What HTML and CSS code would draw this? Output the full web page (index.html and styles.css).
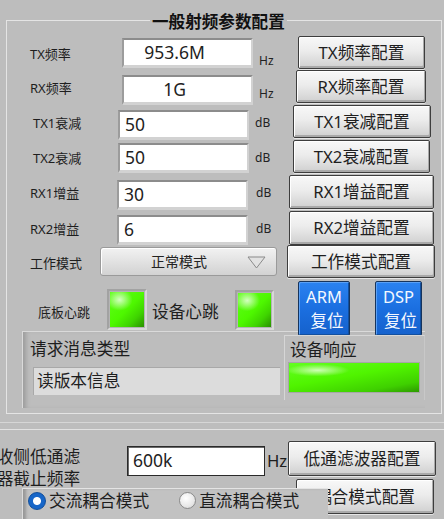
FILE: index.html
```html
<!DOCTYPE html>
<html lang="zh">
<head>
<meta charset="utf-8">
<title>一般射频参数配置</title>
<link rel="stylesheet" href="styles.css">
</head>
<body>
<div class="screen">
  <div class="top-pane">
    <fieldset class="group">
      <legend class="group-title">一般射频参数配置</legend>

      <div class="row r1">
        <span class="lbl lw-a">TX频率</span>
        <div class="num num-center">953.6M</div>
        <span class="unit low uw-45">Hz</span>
        <button class="btn bw-127">TX频率配置</button>
      </div>
      <div class="row r2">
        <span class="lbl lw-a">RX频率</span>
        <div class="num num-center">1G</div>
        <span class="unit low uw-43">Hz</span>
        <button class="btn bw-130">RX频率配置</button>
      </div>
      <div class="row r3">
        <span class="lbl lw-b">TX1衰减</span>
        <div class="num">50</div>
        <span class="unit uw-44">dB</span>
        <button class="btn bw-138">TX1衰减配置</button>
      </div>
      <div class="row r4">
        <span class="lbl lw-b">TX2衰减</span>
        <div class="num">50</div>
        <span class="unit uw-44">dB</span>
        <button class="btn bw-137">TX2衰减配置</button>
      </div>
      <div class="row r5">
        <span class="lbl lw-c">RX1增益</span>
        <div class="num">30</div>
        <span class="unit uw-41">dB</span>
        <button class="btn bw-145">RX1增益配置</button>
      </div>
      <div class="row r6">
        <span class="lbl lw-c">RX2增益</span>
        <div class="num">6</div>
        <span class="unit uw-41">dB</span>
        <button class="btn bw-145">RX2增益配置</button>
      </div>
      <div class="row r7">
        <span class="lbl lw-d">工作模式</span>
        <div class="ring">
          <span class="ring-text">正常模式</span>
          <svg class="ring-arrow" width="19" height="13" viewBox="0 0 19 13"><polygon points="1,1 18,1 9.5,12" fill="#e2e2e2" stroke="#8a8a8a" stroke-width="1"/></svg>
        </div>
        <button class="btn bw-148 ring-btn">工作模式配置</button>
      </div>

      <div class="beat-row">
        <span class="beat-lbl">底板心跳</span>
        <div class="led-frame led-1"><div class="led"></div></div>
        <span class="beat-big">设备心跳</span>
        <div class="led-frame led-2"><div class="led"></div></div>
        <button class="blue-btn arm"><span>ARM</span><span class="l2">复位</span></button>
        <button class="blue-btn dsp"><span>DSP</span><span class="l2">复位</span></button>
      </div>

      <div class="msg">
        <div class="msg-left">
          <div class="msg-title">请求消息类型</div>
          <div class="msg-box">读版本信息</div>
        </div>
        <div class="msg-right">
          <div class="msg-title">设备响应</div>
          <div class="resp-frame"><div class="resp-led"></div></div>
        </div>
      </div>
    </fieldset>
  </div>

  <div class="bottom-pane">
    <div class="row-a">
      <div class="lp-lbl">接收侧低通滤波器截止频率</div>
      <div class="lp-num">600k</div>
      <span class="lp-unit">Hz</span>
      <button class="btn lp-btn">低通滤波器配置</button>
    </div>
    <div class="row-b">
      <button class="btn cp-btn">耦合模式配置</button>
    </div>
    <div class="radio-panel">
      <span class="radio on"></span><span class="radio-text">交流耦合模式</span>
      <span class="radio off"></span><span class="radio-text">直流耦合模式</span>
    </div>
  </div>
</div>
</body>
</html>
```

FILE: styles.css
```css
* { box-sizing: border-box; }
html, body { margin: 0; padding: 0; }
body {
  width: 444px;
  height: 519px;
  overflow: hidden;
  background: #bdbdbd;
  font-family: "Noto Sans", "Noto Sans CJK SC", sans-serif;
  color: #1e1e1e;
}
.screen { width: 444px; height: 519px; overflow: hidden; position: relative; }

/* ---------- top pane ---------- */
.top-pane {
  height: 423px;
  border-bottom: 1px solid #d6d6d6;
  padding-top: 9px;
}
.group {
  margin: 0 0 0 6px;
  width: 436px;
  padding: 5px 0 5px 0;
  border: 1px solid #e4e4e4;
  min-inline-size: 0;
}
.group-title {
  margin-left: 143px;
  padding: 4px 2px 0;
  font-size: 16.6px;
  font-weight: bold;
  line-height: 18px;
  color: #111;
}

.row { display: flex; align-items: flex-start; }
.r1 { height: 34px; }
.r2 { height: 35px; }
.r3 { height: 35px; }
.r4 { height: 35px; }
.r5 { height: 36px; }
.r6 { height: 34px; }
.r7 { height: 34px; }

.lbl {
  flex: none;
  font-size: 13px;
  line-height: 16px;
  margin-top: 10px;
  padding-left: 23px;
  white-space: nowrap;
}
.lw-a { width: 115px; }
.lw-b { width: 111px; padding-left: 26px; }
.lw-c { width: 110px; }
.lw-d { width: 93px; }

.num {
  flex: none;
  width: 131px;
  height: 30px;
  background: #fff;
  border-style: solid;
  border-width: 2px 2px 3px 2px;
  border-color: #8c8c8c #d2d2d2 #d2d2d2 #9c9c9c;
  font-size: 17.5px;
  line-height: 25px;
  padding: 0 0 0 5px;
  color: #222;
  white-space: nowrap;
}
.num-center { text-align: center; padding: 0 26px 0 0; }
.r1 .num { margin-top: 2px; }
.r2 .num { margin-top: 5px; }
.r3 .num { margin-top: 5px; }
.r4 .num { margin-top: 3px; }
.r5 .num { margin-top: 5px; }
.r6 .num { margin-top: 4px; }

.unit {
  flex: none;
  font-size: 12px;
  line-height: 16px;
  margin-top: 10px;
  padding-left: 6px;
  color: #222;
}
.unit.low { margin-top: 17px; }
.r2 .unit.low { margin-top: 16px; }
.uw-45 { width: 45px; }
.uw-43 { width: 43px; }
.uw-44 { width: 44px; }
.uw-41 { width: 41px; padding-left: 8px; }

.btn {
  flex: none;
  height: 33px;
  padding: 0;
  font-family: "Noto Sans", "Noto Sans CJK SC", sans-serif;
  font-size: 16.7px;
  line-height: 20px;
  color: #1f1f1f;
  background: linear-gradient(#f8f8f8, #ececec 45%, #dadada 80%, #cfcfcf);
  border: 1px solid #3d3d3d;
  border-radius: 2px;
  box-shadow: inset 1px 1px 0 #ffffff, inset -1px -2px 0 #a9a9a9, 0 1px 0 #e6e6e6;
  white-space: nowrap;
}
.bw-127 { width: 127px; }
.bw-130 { width: 130px; }
.bw-138 { width: 138px; }
.bw-137 { width: 137px; }
.bw-145 { width: 145px; height: 34px; }
.bw-148 { width: 148px; }
.ring-btn { margin-left: 10px; }

.ring {
  flex: none;
  width: 177px;
  height: 29px;
  margin-top: 2px;
  display: flex;
  align-items: center;
  border: 1px solid #9a9a9a;
  border-radius: 3px;
  background: linear-gradient(#f2f2f2, #e2e2e2 50%, #d2d2d2);
  box-shadow: inset 1px 1px 0 #fff;
}
.ring-text {
  flex: 1;
  text-align: center;
  font-size: 14px;
  line-height: 18px;
  padding-left: 10px;
  color: #222;
}
.ring-arrow { flex: none; margin-right: 10px; margin-top: 2px; }

/* heartbeat */
.beat-row {
  display: flex;
  align-items: flex-start;
  height: 50px;
  margin-top: 2px;
}
.beat-lbl {
  flex: none;
  width: 100px;
  padding-left: 31px;
  font-size: 13px;
  line-height: 16px;
  margin-top: 23px;
}
.led-frame {
  flex: none;
  border-style: solid;
  border-width: 2px;
  border-color: #a2a2a2 #d8d8d8 #d8d8d8 #a2a2a2;
  background: #b4b4b4;
  padding: 1px;
}
.led-1 { width: 40px; height: 41px; margin-top: 8px; }
.led-2 { width: 39px; height: 40px; margin-top: 9px; }
.led {
  width: 100%;
  height: 100%;
  background:
    radial-gradient(ellipse 55% 45% at 28% 22%, rgba(235,255,225,0.85), rgba(120,255,60,0) 70%),
    linear-gradient(135deg, #5eff18 0%, #4ef800 50%, #3fd400 75%, #2a9000 100%);
}
.beat-big {
  flex: none;
  width: 83px;
  margin-left: 5px;
  font-size: 16.7px;
  line-height: 20px;
  margin-top: 21px;
  white-space: nowrap;
}
.blue-btn {
  flex: none;
  height: 55px;
  padding: 0;
  display: flex;
  flex-direction: column;
  align-items: center;
  justify-content: center;
  font-family: "Noto Sans", "Noto Sans CJK SC", sans-serif;
  font-size: 16.5px;
  line-height: 24px;
  color: #f4f8ff;
  background: linear-gradient(#2b82f0, #1b6fe0 50%, #1561cc);
  border: 1px solid #17345c;
  border-radius: 2px;
  box-shadow: inset 1px 1px 0 #5aa0f5, inset -1px -1px 0 #124f9e;
}
.blue-btn .l2 { padding-left: 6px; }
.arm { width: 52px; margin-left: 24px; }
.dsp { width: 47px; margin-left: 25px; }
.dsp .l2 { padding-left: 4px; }

/* message cluster */
.msg {
  display: flex;
  margin-left: 15px;
  width: 403px;
  height: 77px;
  border-top: 1px solid #dadada;
  border-left: 1px solid #dadada;
  box-shadow: inset 5px 0 4px -2px #9d9d9d;
}
.msg-left { flex: none; width: 261px; padding-top: 6px; }
.msg-title {
  font-size: 16.7px;
  line-height: 22px;
  padding-left: 7px;
  white-space: nowrap;
}
.msg-box {
  margin: 7px 0 0 10px;
  width: 247px;
  height: 28px;
  background: #dcdcdc;
  border-top: 1px solid #a8a8a8;
  border-left: 1px solid #a8a8a8;
  font-size: 16.7px;
  line-height: 26px;
  padding-left: 3px;
}
.msg-right {
  flex: none;
  width: 141px;
  height: 65px;
  margin-top: 3px;
  border-top: 1px solid #d6d6d6;
  border-left: 1px solid #d6d6d6;
  border-right: 1px solid #c8c8c8;
  padding-top: 3px;
}
.msg-right .msg-title { padding-left: 5px; }
.resp-frame {
  margin: 1px 0 0 3px;
  width: 132px;
  height: 31px;
  border: 1px solid #a6a6a6;
  background: #3cc800;
}
.resp-led {
  width: 100%;
  height: 100%;
  background:
    radial-gradient(ellipse 35% 30% at 22% 25%, rgba(220,255,200,0.9), rgba(120,255,60,0) 70%),
    linear-gradient(170deg, #62ff20 0%, #50f400 45%, #3fd000 80%, #2d9a00 100%);
}

/* ---------- bottom pane ---------- */
.bottom-pane {
  position: relative;
  margin-top: 6px;
  height: 90px;
  border-top: 1px solid #e2e2e2;
  padding-top: 11px;
}
.row-a { display: flex; align-items: flex-start; height: 35px; }
.lp-lbl {
  flex: none;
  width: 101px;
  margin-left: -20px;
  margin-top: 5px;
  font-size: 16.7px;
  line-height: 22px;
  height: 44px;
}
.lp-num {
  flex: none;
  margin-left: 46px;
  margin-top: 5px;
  width: 138px;
  height: 30px;
  background: #fff;
  border: 1px solid #2a2a2a;
  box-shadow: inset 1px 1px 0 #6a6a6a;
  font-size: 17.5px;
  line-height: 27px;
  padding-left: 5px;
  color: #222;
}
.lp-unit {
  flex: none;
  width: 23px;
  padding-left: 2px;
  margin-top: 10px;
  font-size: 16.7px;
  line-height: 20px;
}
.lp-btn { width: 148px; height: 35px; }
.row-b { margin-top: 3px; display: flex; }
.cp-btn { margin-left: 296px; width: 138px; height: 35px; }

.radio-panel {
  position: absolute;
  left: 22px;
  top: 58px;
  width: 306px;
  height: 40px;
  display: flex;
  align-items: flex-start;
  padding: 2px 0 0 5px;
  background: #c2c2c2;
  border-top: 1px solid #e4e4e4;
  border-left: 1px solid #dcdcdc;
  box-shadow: inset 4px 0 3px -1px #989898;
}
.radio {
  flex: none;
  width: 18px;
  height: 18px;
  border-radius: 50%;
  margin-top: 1px;
}
.radio.on {
  background: radial-gradient(circle, #ffffff 0 3.5px, #1766c8 4.5px);
  border: 1px solid #0f4d9a;
}
.radio.off {
  width: 17px;
  height: 17px;
  margin-left: 30px;
  background: radial-gradient(circle at 40% 35%, #ffffff, #e8e8e8 60%, #cfcfcf);
  border: 1px solid #8a8a8a;
}
.radio-text {
  flex: none;
  margin-left: 3px;
  font-size: 16.7px;
  line-height: 20px;
  white-space: nowrap;
}
```
